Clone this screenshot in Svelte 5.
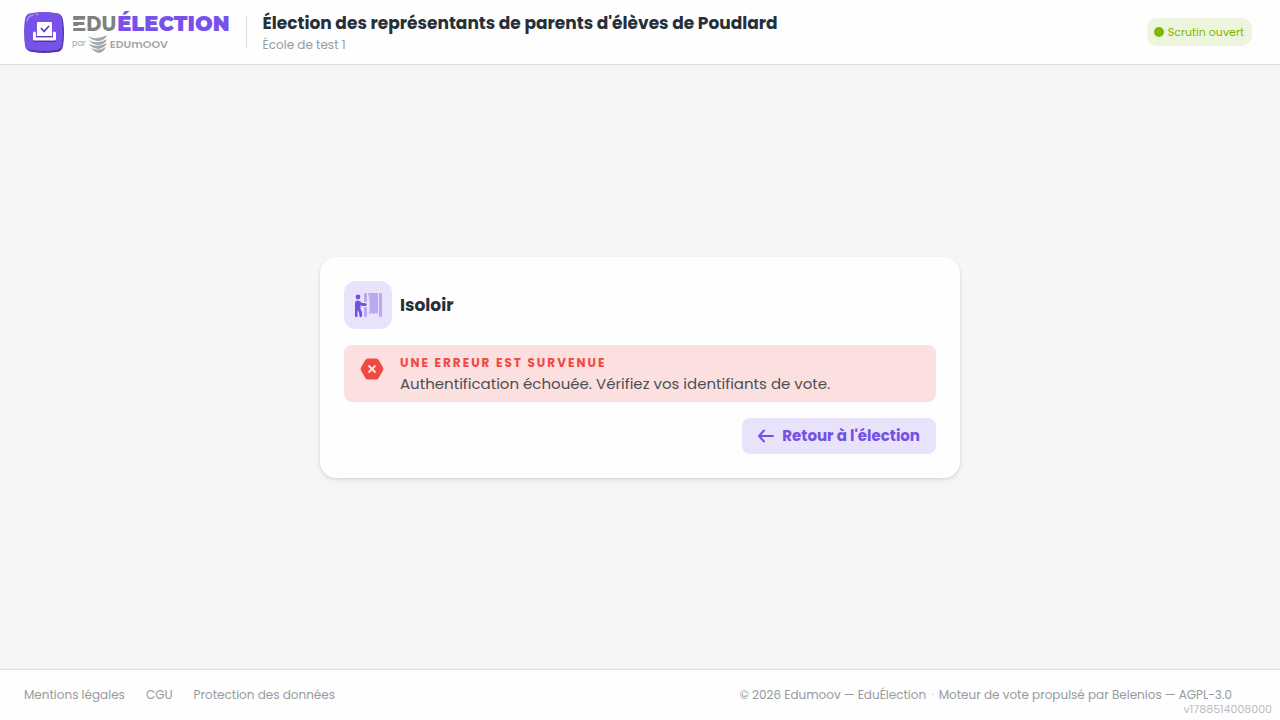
<script lang="ts">
	const election = {
		title: "Élection des représentants de parents d'élèves de Poudlard",
		school: 'École de test 1',
		status: 'Scrutin ouvert'
	};
	const error = {
		title: 'Une erreur est survenue',
		message: 'Authentification échouée. Vérifiez vos identifiants de vote.'
	};
	const links = ['Mentions légales', 'CGU', 'Protection des données'];
	const version = 'v1788514008000';
</script>

<div class="page">
	<header>
		<a class="logo" href="#accueil">
			<svg class="logo-mark" width="40" height="42" viewBox="0 -1 40 42" aria-hidden="true">
				<path d="M3 9C4 4 6 2 11 1.5Q20 0 31 1Q38 1 39 8Q41 21 39 34Q38 40 32 40Q20 42 9 40Q2 40 1 33Q0 22 3 9Z" fill="#4c35a6" />
				<path d="M1 7Q2 1 8 1Q20-1 31 1Q37 1 38 8Q39 20 38 32Q37 38 31 38Q20 40 7 38Q1 38 1 32Q-1 20 1 7Z" fill="#7852e8" />
				<path d="M3 9Q4 4 9 3M12 2.5h2" fill="none" stroke="#a891f2" stroke-width="1.500" stroke-linecap="round" />
				<path d="M10.500 22v6.500h20V22" fill="none" stroke="#4c35a6" stroke-width="3" stroke-linejoin="round" />
				<path d="M10.500 21v6h20v-6" fill="none" stroke="#fff" stroke-width="3" stroke-linecap="round" stroke-linejoin="round" />
				<rect x="13" y="10" width="15" height="15" rx="1" fill="#fff" />
				<path d="m17 16 3 3.500 5-5.500" fill="none" stroke="#5b3cc4" stroke-width="1.800" />
				<path d="M12 24.500h17" stroke="#5b3cc4" />
			</svg>
			<span class="logo-text">
				<span class="logo-name"><span class="edu"><span class="bars">E</span>DU</span>ÉLECTION</span>
				<span class="logo-by">
					par
					<svg width="20" height="18" viewBox="0 0 20 18" aria-hidden="true">
						<g fill="#a5a8aa">
							<path d="M0 1Q8 6 19 0Q17 6 9 6Q3 5 0 1Z" />
							<path d="M1 5Q8 10 19 4Q17 10 9 10Q3 9 1 5Z" />
							<path d="M1 9Q9 13 19 8Q17 13 10 14Q3 13 1 9Z" />
							<path d="M3 13Q10 17 18 12Q16 17 11 18Q6 17 3 13Z" />
						</g>
					</svg>
					<b>EDUmOOV</b>
				</span>
			</span>
		</a>
		<div class="election">
			<h1>{election.title}</h1>
			<p>{election.school}</p>
		</div>
		<span class="status"><span class="dot"></span>{election.status}</span>
	</header>

	<main>
		<section class="card">
			<div class="card-head">
				<span class="card-icon">
					<svg width="28" height="26" viewBox="0 0 28 26" aria-hidden="true">
						<g fill="#baa8f1">
							<rect x="10" y="1" width="3" height="9" rx="1" />
							<rect x="10" y="15" width="3" height="10" rx="1" />
							<path d="M14 1h10v21l-2-1-2 1-2-1-3 1q2-11-1-21Z" />
							<rect x="25" y="1" width="3" height="24" rx="1" />
						</g>
						<g fill="#7451e5">
							<circle cx="4" cy="5" r="2.400" />
							<path d="M1 11Q1 8.500 4 8.500Q6 8.500 8 11L12 11.300Q13.500 12.800 12 14L7.500 14L6.500 12.500V17L8 20V24.500Q6.500 26 5.500 24.500L5 20.500L3.500 18V24.500Q2.500 26 1 24.500Z" />
						</g>
					</svg>
				</span>
				<h2>Isoloir</h2>
			</div>

			<div class="alert" role="alert">
				<svg width="24" height="24" viewBox="0 0 24 24" aria-hidden="true">
					<path d="M8 1.500h8q2 0 3 2l4 7q1 1.500 0 3l-4 7q-1 2-3 2H8q-2 0-3-2l-4-7q-1-1.500 0-3l4-7q1-2 3-2Z" fill="#f04845" />
					<path d="m8.500 8.500 7 7m0-7-7 7" stroke="#fce0df" stroke-width="2" />
				</svg>
				<div>
					<strong>{error.title}</strong>
					<p>{error.message}</p>
				</div>
			</div>

			<div class="actions">
				<button type="button">
					<svg width="16" height="14" viewBox="0 0 16 14" aria-hidden="true">
						<path d="M6 1.500 1 7 6 12.500M1 7h14" fill="none" stroke="currentColor" stroke-width="2" stroke-linecap="round" stroke-linejoin="round" />
					</svg>
					Retour à l'élection
				</button>
			</div>
		</section>
	</main>

	<footer>
		<nav>
			{#each links as link}
				<a href="#infos">{link}</a>
			{/each}
		</nav>
		<p class="legal">
			<span>© 2026 Edumoov — EduÉlection</span>
			<span class="sep">·</span>
			<span>Moteur de vote propulsé par Belenios — AGPL-3.0</span>
		</p>
		<span class="version">{version}</span>
	</footer>
</div>

<style>
	:global(body) {
		margin: 0;
	}
	.page {
		display: flex;
		flex-direction: column;
		min-height: 100vh;
		background: #f5f7f6;
		color: #263039;
		font-family: Poppins, Inter, sans-serif;
		font-size: 14px;
	}
	h1,
	h2,
	p {
		margin: 0;
	}
	a {
		color: inherit;
		text-decoration: none;
	}
	svg {
		flex-shrink: 0;
	}
	header {
		display: flex;
		align-items: center;
		gap: 16px;
		height: 64px;
		padding: 0 28px 0 24px;
		background: #fefefe;
		border-bottom: 1px solid #dadddc;
	}
	.logo {
		display: flex;
		align-items: center;
		gap: 8px;
	}
	.logo-text {
		display: flex;
		flex-direction: column;
	}
	.logo-name {
		display: flex;
		align-items: baseline;
		gap: 1px;
		font-family: Montserrat, Inter, sans-serif;
		font-size: 21px;
		font-weight: 900;
		line-height: 24px;
		color: #7852e8;
	}
	.edu {
		font-family: Poppins, Inter, sans-serif;
		font-weight: 700;
		color: #808080;
	}
	/* the E of the wordmark is three separate bars */
	.bars {
		display: inline-block;
		font-family: Montserrat, Inter, sans-serif;
		font-weight: 900;
		background: linear-gradient(
			#808080 8px,
			transparent 8px 10px,
			#808080 10px 14px,
			transparent 14px 16px,
			#808080 16px
		);
		background-clip: text;
		color: transparent;
	}
	.logo-by {
		display: flex;
		align-items: center;
		gap: 2px;
		height: 16px;
		font-size: 8px;
		line-height: 16px;
		color: #a5a8aa;
	}
	.logo-by b {
		font-size: 11px;
		font-weight: 600;
	}
	.election {
		flex: 1;
		display: flex;
		flex-direction: column;
		justify-content: center;
		height: 28px;
		padding: 4px 0 0 16px;
		border-left: 1px solid #dadddc;
	}
	h1,
	h2 {
		font-size: 17px;
		font-weight: 700;
		line-height: 22px;
	}
	.election p {
		font-size: 12px;
		line-height: 22px;
		color: #969b9e;
	}
	.status {
		display: flex;
		align-items: center;
		gap: 4px;
		height: 28px;
		padding: 0 8px 0 7px;
		border-radius: 10px;
		background: #edf5df;
		color: #7fb800;
		font-size: 11px;
	}
	.dot {
		width: 10px;
		height: 10px;
		border-radius: 50%;
		background: #7fb800;
	}
	main {
		flex: 1;
		display: flex;
		align-items: center;
		justify-content: center;
	}
	.card {
		display: flex;
		flex-direction: column;
		gap: 16px;
		box-sizing: border-box;
		width: 100%;
		max-width: 640px;
		padding: 24px;
		border-radius: 16px;
		background: #fefefe;
		box-shadow: 0 1px 3px rgba(0, 0, 0, 0.12), 0 4px 6px rgba(0, 0, 0, 0.04);
	}
	.card-head {
		display: flex;
		align-items: center;
		gap: 8px;
	}
	.card-icon {
		display: flex;
		align-items: center;
		justify-content: center;
		width: 48px;
		height: 48px;
		border-radius: 12px;
		background: #e8e2fa;
	}
	.alert {
		display: flex;
		gap: 16px;
		padding: 8px 16px;
		border-radius: 8px;
		background: #fce0df;
	}
	.alert svg {
		margin-top: 4px;
	}
	.alert strong {
		display: block;
		font-size: 12px;
		font-weight: 700;
		line-height: 20px;
		letter-spacing: 2px;
		text-transform: uppercase;
		color: #f04845;
	}
	.alert p {
		font-size: 15px;
		line-height: 21px;
		color: #4a4f54;
	}
	.actions {
		display: flex;
		justify-content: flex-end;
	}
	button {
		display: flex;
		align-items: center;
		gap: 8px;
		height: 36px;
		padding: 0 16px;
		border: 0;
		border-radius: 8px;
		background: #e8e2fa;
		color: #7451e5;
		font: inherit;
		font-size: 15px;
		font-weight: 700;
		cursor: pointer;
	}
	footer {
		position: relative;
		display: flex;
		align-items: center;
		justify-content: space-between;
		height: 50px;
		padding: 0 48px 0 24px;
		border-top: 1px solid #dadddc;
		background: #fefefe;
		font-size: 12px;
		line-height: 14px;
		color: #969b9e;
	}
	nav {
		display: flex;
		gap: 21px;
	}
	.legal {
		display: flex;
		gap: 5px;
	}
	.sep {
		color: #c6cacc;
	}
	.version {
		position: absolute;
		right: 8px;
		bottom: 5px;
		font-size: 11px;
		line-height: 12px;
		color: #b9bcbe;
	}
</style>
